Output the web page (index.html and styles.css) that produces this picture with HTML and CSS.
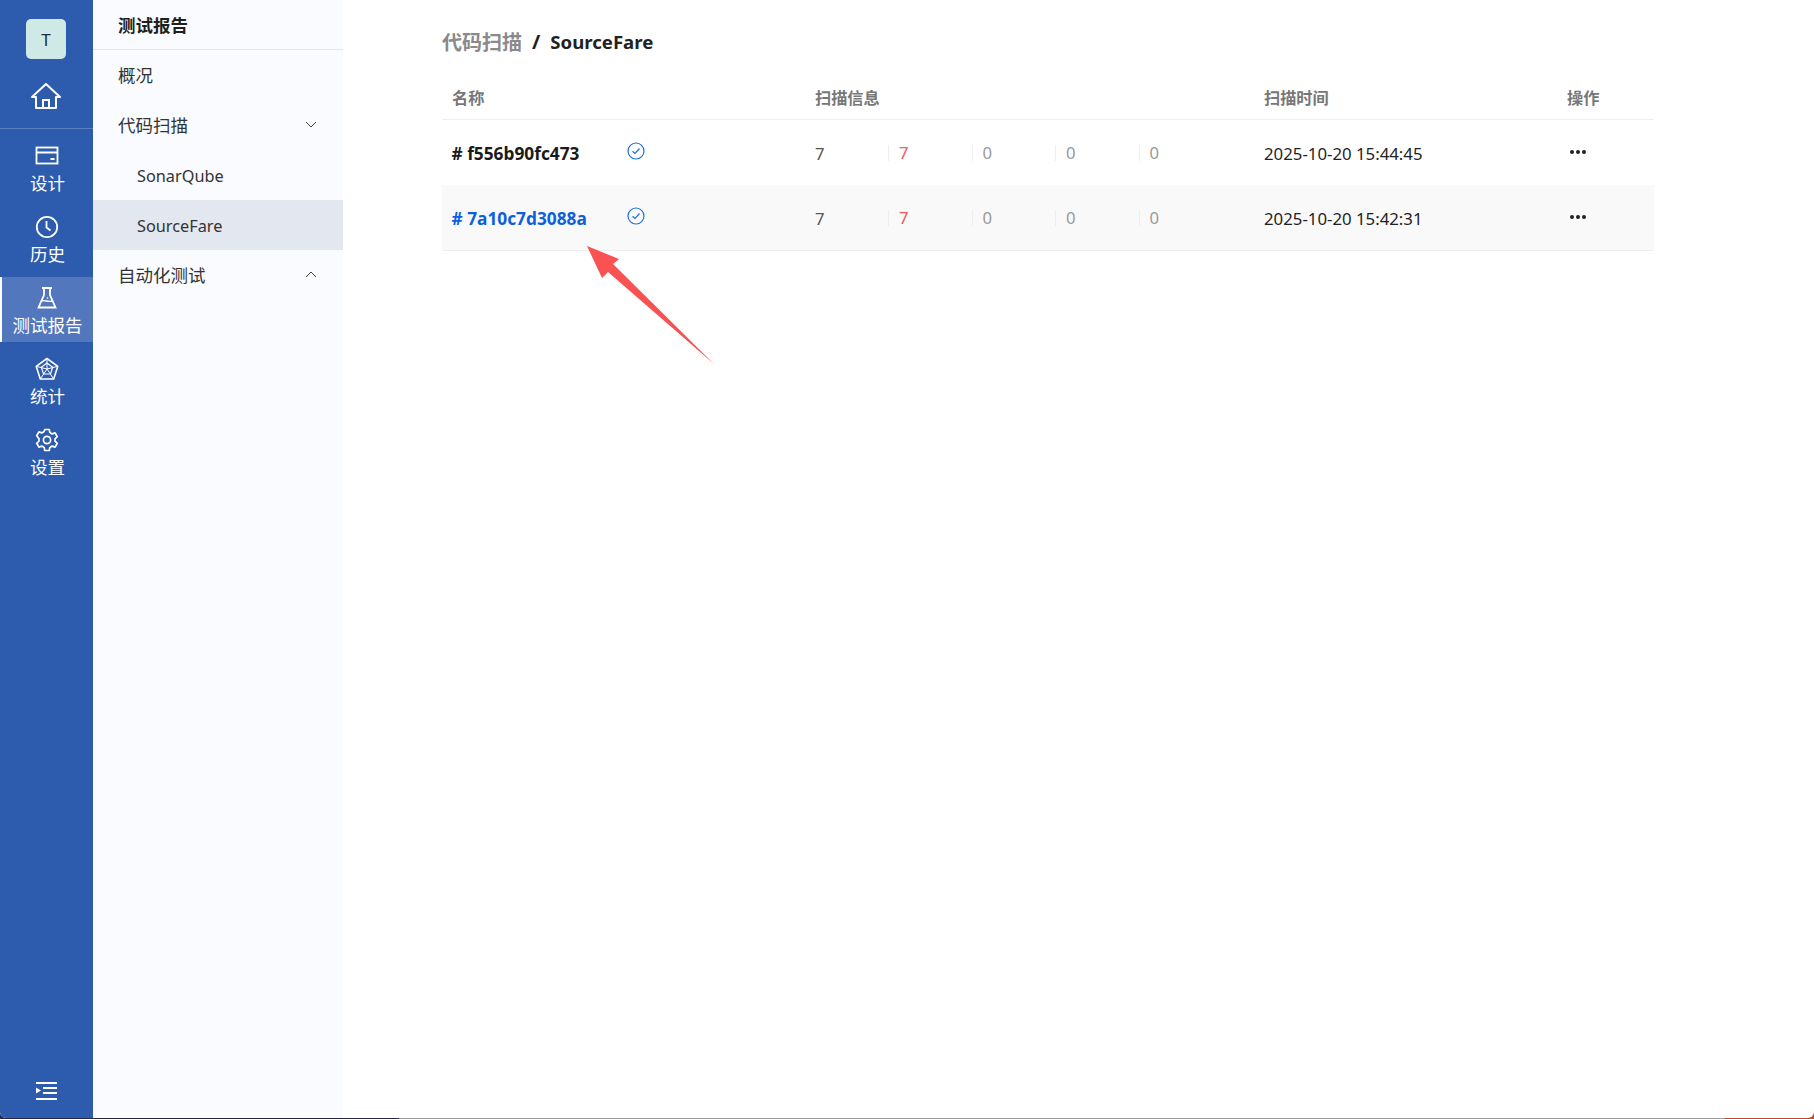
FILE: index.html
```html
<!DOCTYPE html>
<html lang="zh-CN">
<head>
<meta charset="utf-8">
<title>测试报告</title>
<link rel="stylesheet" href="styles.css">
</head>
<body>
<div class="app">
  <nav class="rail">
    <div class="avatar">T</div>
    <div class="home">
      <svg class="ic-home" viewBox="0 0 32 28" fill="none" stroke="#fff" stroke-width="2"><path d="M2 15 16 2l14 13h-4v11H6V15z" stroke-linejoin="round"/><path d="M13 26v-8h6v8"/></svg>
    </div>
    <div class="rail-items">
      <a class="rail-item">
        <svg class="ic" viewBox="0 0 24 24" fill="none" stroke="#fff" stroke-width="1.8"><rect x="1.5" y="3.5" width="21" height="16"/><path d="M1.5 8.5h21M15.5 15h4"/></svg>
        <span>设计</span>
      </a>
      <a class="rail-item">
        <svg class="ic" viewBox="0 0 24 24" fill="none" stroke="#fff" stroke-width="1.8"><circle cx="12" cy="12" r="10.2"/><path d="M11.5 6v6.5l4 3"/></svg>
        <span>历史</span>
      </a>
      <a class="rail-item active">
        <svg class="ic" viewBox="0 0 24 24" fill="none" stroke="#fff" stroke-width="1.8"><path d="M7 2h10M9 2v7L3.5 21.5h17L15 9V2"/><path d="M6.5 15c3-1.5 7 1.500 11 0" stroke-width="1.4"/><circle cx="12.500" cy="12" r=".8" fill="#fff" stroke="none"/></svg>
        <span>测试报告</span>
      </a>
      <a class="rail-item">
        <svg class="ic" viewBox="0 0 24 24" fill="none" stroke="#fff" stroke-width="1.6"><path d="M12 1.500 22.800 9.300 18.700 22H5.300L1.200 9.300z" stroke-linejoin="round"/><path d="M12 6 17.700 10.200 15.500 17H8.500L6.300 10.200z" stroke-width="1.2"/><path d="M12 1.500V12M1.200 9.300 12 12M22.800 9.300 12 12M5.300 22 12 12M18.700 22 12 12" stroke-width="1"/></svg>
        <span>统计</span>
      </a>
      <a class="rail-item">
        <svg class="ic" viewBox="0 0 24 24" fill="none" stroke="#fff" stroke-width="1.7"><path d="M9.800 1.500h4.400l.7 3.100 2.200 1.300 3-1 2.200 3.800-2.300 2.100v2.400l2.300 2.100-2.200 3.800-3-1-2.200 1.300-.7 3.100H9.800l-.7-3.100-2.200-1.300-3 1-2.200-3.800 2.300-2.100v-2.400L1.700 7.700l2.200-3.800 3 1 2.200-1.300z" stroke-linejoin="round"/><circle cx="12" cy="12" r="3.600"/></svg>
        <span>设置</span>
      </a>
    </div>
    <div class="collapse">
      <svg class="ic-collapse" viewBox="0 0 21 18"><path d="M0 0h21v2H0zM7 5h14v2H7zM7 10h14v2H7zM0 16h21v2H0zM0 5.500 5 8.500 0 11.500z" fill="#fff"/></svg>
    </div>
  </nav>

  <aside class="side">
    <div class="side-title">测试报告</div>
    <div class="side-item">概况</div>
    <div class="side-item">代码扫描
      <svg class="chev" viewBox="0 0 12 7" fill="none" stroke="#444" stroke-width="1"><path d="M1 1l5 5 5-5"/></svg>
    </div>
    <div class="side-item sub">SonarQube</div>
    <div class="side-item sub selected">SourceFare</div>
    <div class="side-item">自动化测试
      <svg class="chev" viewBox="0 0 12 7" fill="none" stroke="#444" stroke-width="1"><path d="M1 6l5-5 5 5"/></svg>
    </div>
  </aside>

  <main class="main">
    <div class="crumb"><span class="crumb-parent">代码扫描</span><span class="crumb-sep">/</span><span class="crumb-cur">SourceFare</span></div>
    <div class="table">
      <div class="row head">
        <div class="cell">名称</div>
        <div class="cell shifted">扫描信息</div>
        <div class="cell shifted">扫描时间</div>
        <div class="cell">操作</div>
      </div>
      <div class="row">
        <div class="cell name"><span class="hash">#&nbsp;f556b90fc473</span>
          <svg class="check" viewBox="0 0 18 18" fill="none" stroke="#1f6fe0" stroke-width="1.200"><circle cx="9" cy="9" r="8"/><path d="M5.500 9.200l2.500 2.300 4.500-5"/></svg>
        </div>
        <div class="cell info"><span class="n">7</span><span class="n split red">7</span><span class="n split gray">0</span><span class="n split gray">0</span><span class="n split gray">0</span></div>
        <div class="cell time">2025-10-20 15:44:45</div>
        <div class="cell"><span class="dots"><i></i><i></i><i></i></span></div>
      </div>
      <div class="row hover">
        <div class="cell name"><span class="hash link">#&nbsp;7a10c7d3088a</span>
          <svg class="check" viewBox="0 0 18 18" fill="none" stroke="#1f6fe0" stroke-width="1.200"><circle cx="9" cy="9" r="8"/><path d="M5.500 9.200l2.500 2.300 4.500-5"/></svg>
        </div>
        <div class="cell info"><span class="n">7</span><span class="n split red">7</span><span class="n split gray">0</span><span class="n split gray">0</span><span class="n split gray">0</span></div>
        <div class="cell time">2025-10-20 15:42:31</div>
        <div class="cell"><span class="dots"><i></i><i></i><i></i></span></div>
      </div>
    </div>
  </main>

  <svg class="arrow" viewBox="0 0 132 122" width="132" height="122"><path d="M0 0 32 13 26 18 127.500 118.500 21 26 15 32z" fill="#f85252"/></svg>
</div>
</body>
</html>
```
FILE: styles.css
```css
* { box-sizing: border-box; }
html, body { margin: 0; height: 100%; }
body {
  height: 1119px;
  overflow: hidden;
  background: linear-gradient(to right, #2c2740 0, #2c2740 399px, #9a9a9a 399px, #9a9a9a 1725px, #bf4a28 1725px);
  font-family: "Noto Sans", "Noto Sans CJK SC", sans-serif;
  font-size: 16px;
  color: #1f1f1f;
}
.app {
  position: relative;
  display: flex;
  height: 1118px;
  background: #fff;
  border-radius: 0 0 6px 6px;
  overflow: hidden;
}
.rail {
  width: 93px;
  flex: none;
  background: #2d5cae;
  display: flex;
  flex-direction: column;
  color: #fff;
  padding-top: 19px;
}
.avatar {
  width: 40px;
  height: 40px;
  margin-left: 26px;
  border-radius: 5px;
  background: #cfe9e6;
  color: #1f2d3d;
  display: flex;
  align-items: center;
  justify-content: center;
  font-size: 17px;
}
.home {
  height: 70px;
  border-bottom: 1px solid #5a7fc0;
  display: flex;
  justify-content: center;
  padding: 23px 2px 0 0;
}
.ic-home { width: 32px; height: 28px; }
.rail-items {
  display: flex;
  flex-direction: column;
  gap: 6px;
  padding-top: 6px;
  flex: 1;
}
.rail-item {
  height: 65px;
  display: flex;
  flex-direction: column;
  align-items: center;
  padding: 9px 0 0 2px;
  font-size: 17.500px;
  line-height: 24px;
}
.rail-item .ic { width: 24px; height: 24px; margin: 0 2px 3px 0; }
.rail-item.active {
  background: #5277bd;
  border-left: 2px solid #fff;
  padding-left: 0;
}
.collapse { height: 36px; display: flex; justify-content: center; padding-right: 1px; }
.ic-collapse { width: 21px; height: 18px; }
.side {
  width: 250px;
  flex: none;
  background: #f9fbfe;
}
.side-title {
  height: 50px;
  padding-left: 25px;
  border-bottom: 1px solid #e4e6ea;
  font-weight: 700;
  font-size: 17.500px;
  line-height: 51px;
}
.side-item {
  height: 50px;
  padding: 0 25px 2px;
  display: flex;
  align-items: center;
  justify-content: space-between;
  font-size: 17.500px;
  color: #333;
}
.side-item.sub { padding: 2px 25px 0 44px; font-size: 16.300px; }
.side-item.selected { background: #e2e7f0; }
.chev { width: 12px; height: 7px; margin-right: 1px; }
.main {
  flex: 1;
  padding: 21px 160px 0 99px;
}
.crumb {
  height: 40px;
  display: flex;
  align-items: center;
  font-size: 20px;
  font-weight: 700;
}
.crumb-parent { color: #8a8a8a; }
.crumb-sep { margin: 0 10px; }
.crumb-cur { color: #222; font-size: 18.600px; }
.table { margin-top: 11px; }
.row {
  display: grid;
  grid-template-columns: 362px 449px 304px 97px;
  height: 65px;
  align-items: center;
  border-bottom: 1px solid transparent;
  padding-top: 2px;
}
.row.head {
  height: 48px;
  font-weight: 700;
  font-size: 16.200px;
  color: #777;
  border-bottom-color: #eee;
}
.row.hover { background: #f9f9f9; height: 66px; padding-top: 1px; border-bottom-color: #eee; }
.cell { padding-left: 10px; display: flex; align-items: center; }
.shifted { padding-left: 11px; }
.hash { font-weight: 700; font-size: 17.300px; color: #1a1a1a; width: 175px; margin-left: -.5px; }
.link { color: #0f5fdc; }
.check { width: 18px; height: 18px; margin: -4px 0 0 .5px; }
.info { padding-left: 11px; }
.time { font-size: 16.800px; padding-left: 11px; }
.n { width: 73px; color: #555; font-size: 16.700px; }
.split {
  width: 83.500px;
  border-left: 1px solid #eee;
  padding-left: 10px;
  line-height: 16px;
  height: 16px;
  display: flex;
  align-items: center;
}
.red { color: #ef5a5a; }
.gray { color: #999; }
.dots { display: flex; gap: 2px; margin: -2px 0 0 3px; }
.dots i { width: 4px; height: 4px; border-radius: 50%; background: #222; }
.arrow { position: absolute; left: 587px; top: 246px; }
```
